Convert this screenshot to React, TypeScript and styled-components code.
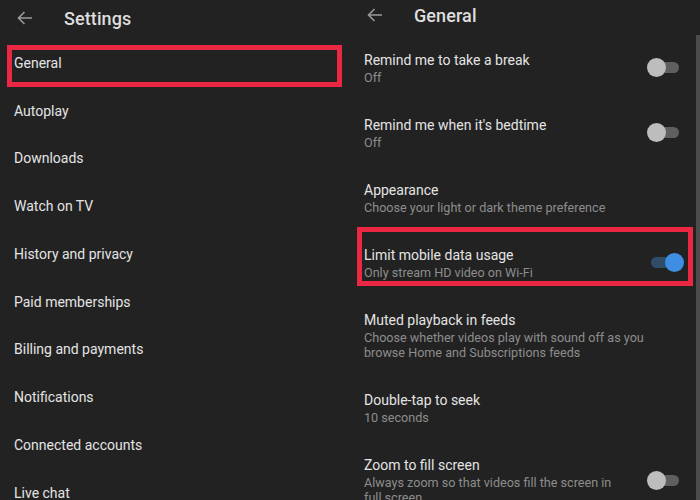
import React from 'react';
import styled, { createGlobalStyle } from 'styled-components';

const colors = {
  bg: '#222222',
  title: '#e4e4e4',
  header: '#dedede',
  sub: '#8d8d8d',
  arrow: '#9a9a9a',
  mark: '#ea2843',
  trackOff: '#5f5f5f',
  knobOff: '#bdbdbd',
  trackOn: '#2f4c68',
  knobOn: '#3e8fe4',
  scroll: '#4b4b4b',
};

const GlobalStyle = createGlobalStyle`
  html, body {
    margin: 0;
    padding: 0;
    background: ${colors.bg};
  }
  body {
    font-family: Roboto, 'Noto Sans', sans-serif;
    -webkit-font-smoothing: antialiased;
  }
`;

type Setting = {
  title: string;
  sub?: string;
  toggle?: 'on' | 'off';
  marked?: boolean;
};

const menu = [
  'General',
  'Autoplay',
  'Downloads',
  'Watch on TV',
  'History and privacy',
  'Paid memberships',
  'Billing and payments',
  'Notifications',
  'Connected accounts',
  'Live chat',
];

const general: Setting[] = [
  { title: 'Remind me to take a break', sub: 'Off', toggle: 'off' },
  { title: "Remind me when it's bedtime", sub: 'Off', toggle: 'off' },
  { title: 'Appearance', sub: 'Choose your light or dark theme preference' },
  { title: 'Limit mobile data usage', sub: 'Only stream HD video on Wi-Fi', toggle: 'on', marked: true },
  {
    title: 'Muted playback in feeds',
    sub: 'Choose whether videos play with sound off as you browse Home and Subscriptions feeds',
  },
  { title: 'Double-tap to seek', sub: '10 seconds' },
  {
    title: 'Zoom to fill screen',
    sub: 'Always zoom so that videos fill the screen in full screen',
    toggle: 'off',
  },
];

const BackArrow = () => (
  <svg width="16" height="14" viewBox="0 0 16 14" fill="none">
    <path d="M15 7H1.5M7.5 1L1.5 7l6 6" stroke={colors.arrow} strokeWidth="1.6" />
  </svg>
);

const App = () => {
  return (
    <>
      <GlobalStyle />
      <StScreen>
        <StPanel>
          <StHeader $height={36}>
            <StBack>
              <BackArrow />
            </StBack>
            <StHeaderTitle>Settings</StHeaderTitle>
          </StHeader>
          <StMenuList>
            {menu.map((item, i) => (
              <StMenuItem key={item} $marked={i === 0}>
                {item}
              </StMenuItem>
            ))}
          </StMenuList>
        </StPanel>

        <StPanel>
          <StHeader $height={30}>
            <StBack>
              <BackArrow />
            </StBack>
            <StHeaderTitle>General</StHeaderTitle>
          </StHeader>
          <StSettingList>
            {general.map((s) => (
              <StSettingRow key={s.title} $marked={!!s.marked}>
                <StSettingText>
                  <StSettingTitle>{s.title}</StSettingTitle>
                  {s.sub && <StSettingSub>{s.sub}</StSettingSub>}
                </StSettingText>
                {s.toggle && (
                  <StSwitch>
                    <StTrack $on={s.toggle === 'on'} />
                    <StKnob $on={s.toggle === 'on'} />
                  </StSwitch>
                )}
              </StSettingRow>
            ))}
          </StSettingList>
          <StScrollbar />
        </StPanel>
      </StScreen>
    </>
  );
};

export const StScreen = styled.div`
  width: 700px;
  height: 500px;
  overflow: hidden;
  display: grid;
  grid-template-columns: 350px 350px;
  background: ${colors.bg};
`;

export const StPanel = styled.div`
  position: relative;
  display: flex;
  flex-direction: column;
  overflow: hidden;
`;

export const StHeader = styled.div<{ $height: number }>`
  height: ${(p) => p.$height}px;
  flex-shrink: 0;
  display: flex;
  align-items: center;
`;

export const StBack = styled.div`
  width: 64px;
  padding-left: 17px;
  box-sizing: border-box;
  display: flex;
  align-items: center;
`;

export const StHeaderTitle = styled.div`
  font-size: 18px;
  font-weight: 500;
  color: ${colors.header};
  letter-spacing: 0.1px;
`;

export const StMenuList = styled.div`
  padding-top: 3px;
  display: flex;
  flex-direction: column;
`;

export const StMenuItem = styled.div<{ $marked: boolean }>`
  position: relative;
  height: 47.75px;
  flex-shrink: 0;
  padding-left: 14px;
  display: flex;
  align-items: center;
  font-size: 14px;
  color: ${colors.title};

  &::after {
    content: '';
    display: ${(p) => (p.$marked ? 'block' : 'none')};
    position: absolute;
    left: 7px;
    right: 8px;
    top: 6px;
    bottom: 0;
    border: 5px solid ${colors.mark};
    pointer-events: none;
  }
`;

export const StSettingList = styled.div`
  padding-top: 5px;
  display: flex;
  flex-direction: column;
`;

export const StSettingRow = styled.div<{ $marked: boolean }>`
  position: relative;
  padding: 15px 16px 15px 14px;
  display: flex;
  align-items: center;
  gap: 20px;

  &::after {
    content: '';
    display: ${(p) => (p.$marked ? 'block' : 'none')};
    position: absolute;
    left: 7px;
    right: 7px;
    top: -3px;
    bottom: 9px;
    border: 5px solid ${colors.mark};
    pointer-events: none;
  }
`;

export const StSettingText = styled.div`
  flex: 1;
  min-width: 0;
`;

export const StSettingTitle = styled.div`
  font-size: 14px;
  line-height: 20px;
  color: ${colors.title};
`;

export const StSettingSub = styled.div`
  font-size: 12.6px;
  line-height: 15px;
  color: ${colors.sub};
`;

export const StSwitch = styled.div`
  position: relative;
  width: 37px;
  height: 19px;
  flex-shrink: 0;
`;

export const StTrack = styled.div<{ $on: boolean }>`
  position: absolute;
  left: 4px;
  right: 5px;
  top: 4px;
  height: 11px;
  border-radius: 6px;
  background: ${(p) => (p.$on ? colors.trackOn : colors.trackOff)};
`;

export const StKnob = styled.div<{ $on: boolean }>`
  position: absolute;
  top: 0;
  left: ${(p) => (p.$on ? 18 : 0)}px;
  width: 19px;
  height: 19px;
  border-radius: 50%;
  background: ${(p) => (p.$on ? colors.knobOn : colors.knobOff)};
`;

export const StScrollbar = styled.div`
  position: absolute;
  right: 0;
  top: 35px;
  bottom: 0;
  width: 4px;
  background: ${colors.scroll};
`;

export default App;
